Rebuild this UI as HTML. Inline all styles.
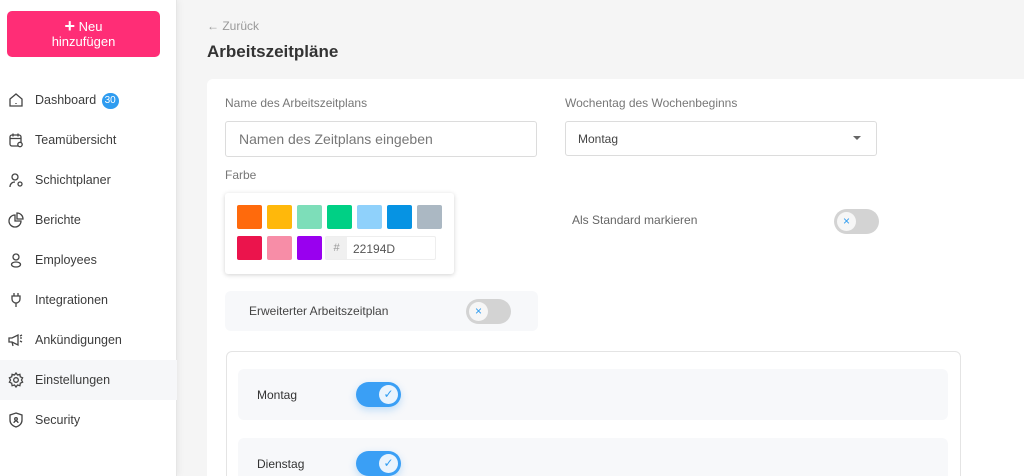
<!DOCTYPE html>
<html style="width:1024px;height:476px;overflow:hidden"><head><meta charset="utf-8"><style>
*{box-sizing:border-box;margin:0;padding:0}
body{width:1024px;height:476px;overflow:hidden;background:#f5f5f5;font-family:"Liberation Sans",sans-serif;position:relative;color:#333}
.sb{position:absolute;left:0;top:0;width:177px;height:476px;background:#fff;border-right:1px solid #e6e6e6;box-shadow:2px 0 6px rgba(0,0,0,.05)}
.btn{position:absolute;left:7px;top:11px;width:153px;height:46px;background:#ff2d76;border-radius:5px;color:#fff;font-size:13px;text-align:center;line-height:15px;padding-top:8px}
.btn b{font-size:18px;font-weight:bold;vertical-align:-1px}
.it{position:absolute;left:0;width:177px;height:40px;font-size:12.5px;color:#3c3c3c;line-height:40px;padding-left:35px}
.it svg{position:absolute;left:8px;top:12px}
.badge{display:inline-block;background:#2f9cf0;color:#fff;border-radius:8px;font-size:10px;line-height:16px;width:17px;text-align:center;margin-left:2px;vertical-align:1px}
.abs{position:absolute}
.card{position:absolute;left:207px;top:79px;width:830px;height:420px;background:#fff;border-radius:6px}
.lbl{position:absolute;font-size:12px;color:#777}
.inp{position:absolute;border:1px solid #dcdcdc;border-radius:3px;background:#fff}
.tg{position:absolute;width:45px;height:25px;border-radius:13px;background:#d3d3d3}
.tg i{position:absolute;left:3px;top:3px;width:19px;height:19px;border-radius:50%;background:#f6f6f6;color:#2f9cf0;font-style:normal;font-size:12px;text-align:center;line-height:19px}
.on{background:#3a9ff5;box-shadow:0 3px 8px rgba(58,159,245,.3)}
.on i{left:23px;background:#eaf4fd}
.sw{position:absolute;width:25px;height:24px;border-radius:2px}
.row{position:absolute;left:238px;width:710px;height:51px;background:#f7f8fa;border-radius:6px;font-size:12px;color:#333}
</style></head><body>
<div class="sb">
<div class="btn"><b>+</b> Neu<br>hinzufügen</div>
<div class="it" style="top:80px"><svg width="16" height="16" viewBox="0 0 16 16" fill="none" stroke="#444" stroke-width="1.3"><path d="M2 7L8 2l6 5v7H2z"/><path d="M8 11v1"/></svg>Dashboard <span class="badge">30</span></div>
<div class="it" style="top:120px"><svg width="16" height="16" viewBox="0 0 16 16" fill="none" stroke="#444" stroke-width="1.3"><rect x="2" y="3" width="11" height="11" rx="2"/><path d="M5 1.5v3M10 1.5v3M2 6.5h11"/><circle cx="12" cy="12.5" r="2.2" fill="#fff"/></svg>Teamübersicht</div>
<div class="it" style="top:160px"><svg width="16" height="16" viewBox="0 0 16 16" fill="none" stroke="#444" stroke-width="1.3"><circle cx="7" cy="5" r="3"/><path d="M2 15c0-3 2-5 5-5"/><circle cx="12" cy="12" r="2"/></svg>Schichtplaner</div>
<div class="it" style="top:200px"><svg width="16" height="16" viewBox="0 0 16 16" fill="none" stroke="#444" stroke-width="1.3"><path d="M7 3a6 6 0 1 0 6 6H7z"/><path d="M9 1v6h6a6 6 0 0 0-6-6z"/></svg>Berichte</div>
<div class="it" style="top:240px"><svg width="16" height="16" viewBox="0 0 16 16" fill="none" stroke="#444" stroke-width="1.3"><circle cx="8" cy="5" r="3"/><ellipse cx="8" cy="12.5" rx="4.5" ry="2.5"/></svg>Employees</div>
<div class="it" style="top:280px"><svg width="16" height="16" viewBox="0 0 16 16" fill="none" stroke="#444" stroke-width="1.3"><path d="M6 1v3M10 1v3M4 4h8v3a4 4 0 0 1-8 0zM8 11v4"/></svg>Integrationen</div>
<div class="it" style="top:320px"><svg width="16" height="16" viewBox="0 0 16 16" fill="none" stroke="#444" stroke-width="1.3"><path d="M1 6h3l6-3v10L4 10H1zM4 10l1 4M12 6h2M12 9l2 1M12 4l2-1"/></svg>Ankündigungen</div>
<div class="it" style="top:360px;background:#f6f7f9"><svg width="16" height="16" viewBox="0 0 16 16" fill="none" stroke="#444" stroke-width="1.3"><circle cx="8" cy="8" r="2.3"/><path d="M8 1l1.5 2 2.4-.7.4 2.5 2.3 1L13.5 8l1.1 2.2-2.3 1-.4 2.5-2.4-.7L8 15l-1.5-2-2.4.7-.4-2.5-2.3-1L2.5 8 1.4 5.8l2.3-1 .4-2.5 2.4.7z"/></svg>Einstellungen</div>
<div class="it" style="top:400px"><svg width="16" height="16" viewBox="0 0 16 16" fill="none" stroke="#444" stroke-width="1.3"><path d="M8 1l6 2v5c0 4-3 6-6 7-3-1-6-3-6-7V3z"/><circle cx="8" cy="7" r="1.3"/><path d="M6 11a2 2 0 0 1 4 0"/></svg>Security</div>
</div>
<div class="abs" style="left:207px;top:19px;font-size:12px;color:#999">← Zurück</div>
<div class="abs" style="left:207px;top:42px;font-size:17px;font-weight:bold;color:#333">Arbeitszeitpläne</div>
<div class="card"></div>
<div class="lbl" style="left:225px;top:96px">Name des Arbeitszeitplans</div>
<div class="inp" style="left:225px;top:121px;width:312px;height:36px;font-size:14px;color:#777;padding:9px 0 0 13px">Namen des Zeitplans eingeben</div>
<div class="lbl" style="left:565px;top:96px">Wochentag des Wochenbeginns</div>
<div class="inp" style="left:565px;top:121px;width:312px;height:35px;font-size:12px;color:#444;padding:10px 0 0 12px">Montag<span style="position:absolute;right:15px;top:14px;border:4px solid transparent;border-top:4px solid #666"></span></div>
<div class="lbl" style="left:225px;top:168px">Farbe</div>
<div class="abs" style="left:225px;top:193px;width:229px;height:81px;background:#fff;border-radius:3px;box-shadow:0 1px 5px rgba(0,0,0,.18)"></div>
<div class="sw" style="left:237px;top:205px;background:#ff6a0c"></div>
<div class="sw" style="left:267px;top:205px;background:#ffb80b"></div>
<div class="sw" style="left:297px;top:205px;background:#7ddeb9"></div>
<div class="sw" style="left:327px;top:205px;background:#00d085"></div>
<div class="sw" style="left:357px;top:205px;background:#8fd1fb"></div>
<div class="sw" style="left:387px;top:205px;background:#0693e3"></div>
<div class="sw" style="left:417px;top:205px;background:#abb8c3"></div>
<div class="sw" style="left:237px;top:236px;background:#eb144c"></div>
<div class="sw" style="left:267px;top:236px;background:#f78da7"></div>
<div class="sw" style="left:297px;top:236px;background:#9900ef"></div>
<div class="abs" style="left:325px;top:236px;width:111px;height:24px;border:1px solid #eee;border-radius:2px;font-size:12px;color:#555"><span style="display:inline-block;width:21px;height:22px;background:#f0f0f0;color:#999;text-align:center;line-height:22px;font-size:11px">#</span><span style="position:absolute;left:27px;top:5px">22194D</span></div>
<div class="abs" style="left:225px;top:291px;width:313px;height:40px;background:#f7f8fa;border-radius:6px;font-size:12px;color:#444;padding:13px 0 0 24px">Erweiterter Arbeitszeitplan</div>
<div class="tg" style="left:466px;top:299px"><i>×</i></div>
<div class="abs" style="left:572px;top:213px;font-size:12px;color:#666">Als Standard markieren</div>
<div class="tg" style="left:834px;top:209px"><i>×</i></div>
<div class="abs" style="left:226px;top:351px;width:735px;height:140px;border:1px solid #e4e4e4;border-radius:6px"></div>
<div class="row" style="top:369px"><span class="abs" style="left:19px;top:19px">Montag</span></div>
<div class="tg on" style="left:356px;top:382px"><i>✓</i></div>
<div class="row" style="top:438px"><span class="abs" style="left:19px;top:19px">Dienstag</span></div>
<div class="tg on" style="left:356px;top:451px"><i>✓</i></div>
</body></html>
